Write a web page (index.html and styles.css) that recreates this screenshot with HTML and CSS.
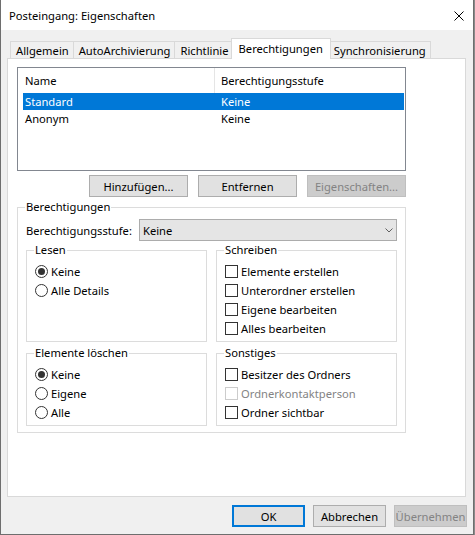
FILE: index.html
```html
<!DOCTYPE html>
<html lang="de">
<head>
<meta charset="utf-8">
<title>Posteingang: Eigenschaften</title>
<link rel="stylesheet" href="styles.css">
</head>
<body>
<div class="window">
  <div class="titlebar">
    <span class="title">Posteingang: Eigenschaften</span>
    <svg class="close" width="10" height="10" viewBox="0 0 10 10"><path d="M0.5 0.5 L9.5 9.5 M9.5 0.5 L0.5 9.5" stroke="#000" stroke-width="1" fill="none"/></svg>
  </div>
  <div class="client">
    <div class="tabs">
      <div class="tab">Allgemein</div>
      <div class="tab">AutoArchivierung</div>
      <div class="tab">Richtlinie</div>
      <div class="tab active">Berechtigungen</div>
      <div class="tab">Synchronisierung</div>
    </div>
    <div class="panel">
      <div class="list">
        <div class="list-head">
          <div class="hc1">Name</div>
          <div class="hc2">Berechtigungsstufe</div>
        </div>
        <div class="row sel"><div class="c1">Standard</div><div class="c2">Keine</div></div>
        <div class="row"><div class="c1">Anonym</div><div class="c2">Keine</div></div>
      </div>
      <div class="btnrow">
        <div class="btn">Hinzufügen...</div>
        <div class="btn">Entfernen</div>
        <div class="btn disabled">Eigenschaften...</div>
      </div>
      <fieldset class="group outer">
        <legend>Berechtigungen</legend>
        <div class="level">
          <span class="level-label">Berechtigungsstufe:</span>
          <div class="combo"><span>Keine</span><svg width="8" height="5" viewBox="0 0 8 5"><path d="M0.5 0.5 L4 4 L7.5 0.5" stroke="#606060" stroke-width="1" fill="none"/></svg></div>
        </div>
        <div class="perm-grid">
          <fieldset class="group sub">
            <legend>Lesen</legend>
            <div class="opt"><span class="radio on"></span>Keine</div>
            <div class="opt"><span class="radio"></span>Alle Details</div>
          </fieldset>
          <fieldset class="group sub">
            <legend>Schreiben</legend>
            <div class="opt"><span class="check"></span>Elemente erstellen</div>
            <div class="opt"><span class="check"></span>Unterordner erstellen</div>
            <div class="opt"><span class="check"></span>Eigene bearbeiten</div>
            <div class="opt"><span class="check"></span>Alles bearbeiten</div>
          </fieldset>
          <fieldset class="group sub">
            <legend>Elemente löschen</legend>
            <div class="opt"><span class="radio on"></span>Keine</div>
            <div class="opt"><span class="radio"></span>Eigene</div>
            <div class="opt"><span class="radio"></span>Alle</div>
          </fieldset>
          <fieldset class="group sub">
            <legend>Sonstiges</legend>
            <div class="opt"><span class="check"></span>Besitzer des Ordners</div>
            <div class="opt disabled"><span class="check"></span>Ordnerkontaktperson</div>
            <div class="opt"><span class="check"></span>Ordner sichtbar</div>
          </fieldset>
        </div>
      </fieldset>
    </div>
    <div class="footer">
      <div class="btn small default">OK</div>
      <div class="btn small">Abbrechen</div>
      <div class="btn small disabled">Übernehmen</div>
    </div>
  </div>
</div>
</body>
</html>
```
FILE: styles.css
```css
* { box-sizing: border-box; }
html { background: #8a8a8a; }
body {
  margin: 0;
  width: 475px;
  height: 535px;
  font-family: "Noto Sans", "Open Sans", sans-serif;
  font-size: 11.2px;
  color: #000;
}
.window {
  width: 474px;
  height: 535px;
  border: 1px solid #6e6e6e;
  border-top: 0;
  background: #f0f0f0;
  display: flex;
  flex-direction: column;
}
.titlebar {
  height: 30px;
  flex: none;
  background: #fff;
  display: flex;
  align-items: center;
  justify-content: space-between;
  padding: 1px 9px 0 8px;
}
.client {
  flex: 1;
  padding: 8px 6px 0 6px;
  display: flex;
  flex-direction: column;
}
.tabs {
  display: flex;
  align-items: flex-end;
  height: 20px;
  padding-left: 3px;
}
.tab {
  height: 17px;
  border: 1px solid #d9d9d9;
  border-bottom: 0;
  background: #f0f0f0;
  padding: 1px 4px 0 5px;
  line-height: 15px;
  margin-left: -1px;
  white-space: nowrap;
}
.tab:first-child { margin-left: 0; }
.tab.active {
  height: 21px;
  background: #fff;
  margin: 0 -2px -1px -3px;
  padding: 0 7px;
  line-height: 19px;
  position: relative;
  z-index: 1;
}
.panel {
  width: 459px;
  height: 439px;
  border: 1px solid #d9d9d9;
  background: #fff;
  padding: 8px 0 0 9px;
}
.list {
  width: 389px;
  height: 104px;
  border: 1px solid #828790;
  background: #fff;
}
.list-head {
  display: flex;
  height: 25px;
}
.hc1 {
  width: 196px;
  padding-left: 7px;
  line-height: 25px;
}
.hc2 {
  border-left: 1px solid #e5e5e5;
  padding-left: 6px;
  line-height: 25px;
}
.row {
  display: flex;
  height: 17px;
  line-height: 17px;
  margin: 0 1px 0 5px;
}
.row.sel { background: #0078d7; color: #fff; }
.c1 { width: 191px; padding-left: 2px; }
.c2 { padding-left: 7px; }
.btnrow {
  display: flex;
  justify-content: flex-end;
  gap: 10px;
  width: 389px;
  margin-top: 4px;
}
.btn {
  width: 99px;
  height: 22px;
  border: 1px solid #adadad;
  background: #e1e1e1;
  display: flex;
  align-items: center;
  justify-content: center;
  white-space: nowrap;
}
.btn.disabled {
  background: #cccccc;
  border-color: #bfbfbf;
  color: #838383;
}
.btn.small { width: 73px; }
.btn.default { border: 2px solid #0078d7; }
.group {
  margin: 0;
  border: 1px solid #dcdcdc;
  min-width: 0;
}
.group > legend {
  padding: 0 1px;
  margin-left: -1px;
  line-height: 16px;
}
.outer {
  width: 389px;
  margin-top: 2px;
  padding: 4px 8px 6px 8px;
}
.level {
  display: flex;
  align-items: center;
  height: 22px;
  margin-bottom: 1px;
}
.level-label { width: 113px; flex: none; }
.combo {
  width: 258px;
  height: 22px;
  border: 1px solid #acacac;
  background: #e5e5e5;
  display: flex;
  align-items: center;
  justify-content: space-between;
  padding: 0 3px 0 3px;
}
.perm-grid {
  display: grid;
  grid-template-columns: 181px 181px;
  column-gap: 9px;
  row-gap: 3px;
}
.sub { padding: 4px 8px 3px 8px; }
.opt {
  display: flex;
  align-items: center;
  height: 19px;
  gap: 3px;
  white-space: nowrap;
}
.opt.disabled { color: #838383; }
.radio {
  width: 13px;
  height: 13px;
  border: 1px solid #333;
  border-radius: 50%;
  background: #fff;
  display: flex;
  align-items: center;
  justify-content: center;
  flex: none;
}
.radio.on::after {
  content: "";
  width: 7px;
  height: 7px;
  border-radius: 50%;
  background: #333;
}
.check {
  width: 13px;
  height: 13px;
  border: 1px solid #333;
  background: #fff;
  flex: none;
}
.opt.disabled .check { border-color: #cccccc; }
.footer {
  display: flex;
  justify-content: flex-end;
  gap: 8px;
  margin-top: 8px;
}
```
